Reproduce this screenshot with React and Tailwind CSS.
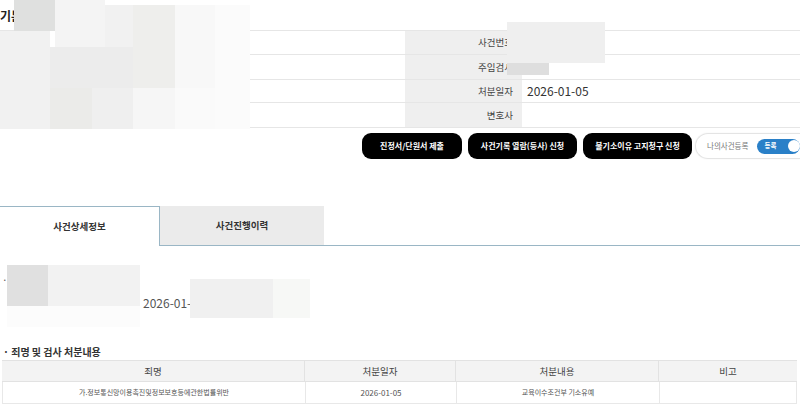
import React from "react";

const INFO = [
  { label: "사건번호", value: "", h: "h-[24px]" },
  { label: "주임검사", value: "", h: "h-[25px]" },
  { label: "처분일자", value: "2026-01-05", h: "h-[23px]" },
  { label: "변호사", value: "", h: "h-[25px]" },
];

// redaction blocks laid over the page
const MOSAIC = [
  { c: "left-[14px] top-0 w-[41px] h-[31px] bg-[#dfe0df]" },
  { c: "left-[55px] top-0 w-[50px] h-[47px] bg-[#f4f4f4]" },
  { c: "left-[105px] top-[5px] w-[28px] h-[42px] bg-[#f1f1f1]" },
  { c: "left-[133px] top-[5px] w-[42px] h-[83px] bg-[#eeeeec]" },
  { c: "left-[175px] top-[5px] w-[40px] h-[83px] bg-[#f8f8f8]" },
  { c: "left-[215px] top-[5px] w-[35px] h-[124px] bg-[#fbfbfb]" },
  { c: "left-0 top-[31px] w-[50px] h-[98px] bg-[#f1f1f1]" },
  { c: "left-[50px] top-[47px] w-[83px] h-[41px] bg-[#ececec]" },
  { c: "left-[50px] top-[88px] w-[42px] h-[41px] bg-[#ebebe9]" },
  { c: "left-[92px] top-[88px] w-[41px] h-[41px] bg-[#efefef]" },
  { c: "left-[133px] top-[88px] w-[42px] h-[41px] bg-[#f6f6f6]" },
  { c: "left-[175px] top-[88px] w-[40px] h-[41px] bg-[#fafafa]" },
  { c: "left-[507px] top-[22px] w-[98px] h-[41px] bg-[#efefef]" },
  { c: "left-[507px] top-[63px] w-[42px] h-[12px] bg-[#dedede]" },
  { c: "left-[7px] top-[265px] w-[41px] h-[41px] bg-[#e0e0e0]" },
  { c: "left-[48px] top-[265px] w-[92px] h-[41px] bg-[#f2f2f2]" },
  { c: "left-[7px] top-[306px] w-[133px] h-[21px] bg-[#fcfcfc]" },
  { c: "left-[190px] top-[279px] w-[83px] h-[39px] bg-[#f0f0f0]" },
  { c: "left-[273px] top-[279px] w-[37px] h-[39px] bg-[#f7f8f6]" },
];

const BUTTONS = [
  { t: "진정서/단원서 제출", w: "w-[100px]" },
  { t: "사건기록 열람(등사) 신청", w: "w-[109px]" },
  { t: "불기소이유 고지청구 신청", w: "w-[109px]" },
];

export default function App() {
  return (
    <div
      className="relative w-[800px] h-[413px] overflow-hidden bg-white text-[#333]"
      style={{ fontFamily: '"Noto Sans CJK KR", "Noto Sans", sans-serif' }}
    >
      {/* 기본정보 */}
      <div className="h-[30px] pt-[8px] text-[12px] font-bold leading-[16px] text-[#222]">기본</div>
      <div className="border-t border-[#e6e6e6]">
        {INFO.map((r) => (
          <div key={r.label} className={`${r.h} flex border-b border-[#e6e6e6]`}>
            <div className="w-[405px]" />
            <div className="w-[117px] bg-[#efefef] flex items-center justify-end pr-[9px] text-[9.5px] text-[#444]">
              {r.label}
            </div>
            <div className="flex-1 flex items-center pl-[5px] text-[12px] text-[#333]">{r.value}</div>
          </div>
        ))}
      </div>

      {/* buttons */}
      <div className="mt-[5px] flex items-center justify-end gap-[6px]">
        {BUTTONS.map((b) => (
          <div
            key={b.t}
            className={`${b.w} h-[26px] rounded-[9px] bg-black text-white text-[8px] font-bold flex items-center justify-center whitespace-nowrap`}
          >
            {b.t}
          </div>
        ))}
        <div className="-ml-[3px] w-[105px] h-[26px] rounded-l-full border border-r-0 border-[#e4e4e4] flex items-center pl-[11px] gap-[9px] shadow-[0_0_2px_rgba(0,0,0,0.06)]">
          <span className="text-[7.5px] text-[#777] whitespace-nowrap">나의사건등록</span>
          <div className="relative h-[15px] w-[44px] rounded-full bg-[#2a80c8] flex items-center pl-[7px]">
            <span className="text-[6.5px] font-bold text-white">등록</span>
            <span className="absolute left-[31px] top-[1.5px] h-[12px] w-[12px] rounded-full bg-white" />
          </div>
        </div>
      </div>

      {/* tabs */}
      <div className="mt-[47px] flex h-[40px]">
        <div className="w-[160px] border-t border-r border-[#9ab6c5] flex items-center justify-center text-[9.5px] font-bold text-[#333]">
          사건상세정보
        </div>
        <div className="flex-1 border-b border-[#9ab6c5]">
          <div className="w-[164px] h-full bg-[#ebebeb] flex items-center justify-center text-[9.5px] font-bold text-[#333]">
            사건진행이력
          </div>
        </div>
      </div>

      {/* summary */}
      <div className="relative h-[95px]">
        <span className="absolute left-[2px] top-[26px] text-[10px] text-[#555]">·</span>
        <span className="absolute left-[143px] top-[48px] text-[12px] text-[#555]">2026-01-</span>
      </div>

      {/* 죄명 및 검사 처분내용 */}
      <div className="h-[20px] flex items-center pl-[3px] text-[10px] font-bold text-[#333]">
        · 죄명 및 검사 처분내용
      </div>
      <div className="mx-[2px] mt-[-1px] w-[795px]">
        <div className="grid grid-cols-[303px_151px_203px_138px] h-[22px] bg-[#f3f3f3] border-y border-[#e2e2e2] text-[9.5px] text-[#444]">
          <div className="flex items-center justify-center border-r border-[#e2e2e2]">죄명</div>
          <div className="flex items-center justify-center border-r border-[#e2e2e2]">처분일자</div>
          <div className="flex items-center justify-center border-r border-[#e2e2e2]">처분내용</div>
          <div className="flex items-center justify-center">비고</div>
        </div>
        <div className="grid grid-cols-[303px_151px_203px_138px] h-[22px] border-b border-l border-r border-[#e8e8e8] text-[7px] text-[#555]">
          <div className="flex items-center justify-center border-r border-[#e8e8e8]">가.정보통신망이용촉진및정보보호등에관한법률위반</div>
          <div className="flex items-center justify-center border-r border-[#e8e8e8] text-[8px]">2026-01-05</div>
          <div className="flex items-center justify-center border-r border-[#e8e8e8]">교육이수조건부 기소유예</div>
          <div />
        </div>
      </div>

      {MOSAIC.map((m, i) => (
        <div key={i} className={`absolute ${m.c}`} />
      ))}
    </div>
  );
}
